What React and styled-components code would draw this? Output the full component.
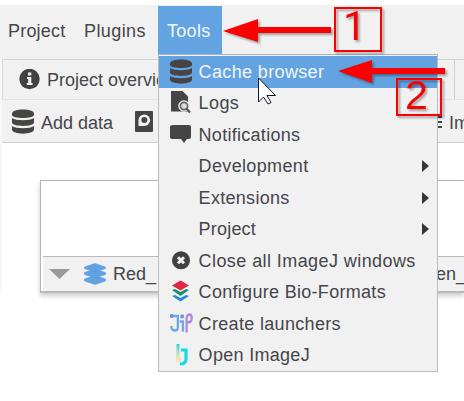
import React from "react";
import styled, { createGlobalStyle } from "styled-components";

const Global = createGlobalStyle`
  * { box-sizing: border-box; }
  body { margin: 0; background: #fff; overflow: hidden; }
`;
const Window = styled.main`
  position: relative;
  width: 464px;
  height: 401px;
  padding-top: 5px;
  overflow: hidden;
  background: #fff;
  color: #45454b;
  font: 18px/24px "Liberation Sans", Arial, sans-serif;
  white-space: nowrap;
`;
const MenuBar = styled.nav`
  display: flex;
  height: 54px;
  background: #f1f1f1;
`;
const MenuTitle = styled.div`
  width: ${(p) => p.$width}px;
  height: ${(p) => (p.$active ? 48 : 49)}px;
  margin-top: ${(p) => (p.$active ? 1 : 0)}px;
  padding: ${(p) => (p.$active ? 13 : 14)}px 0 0 ${(p) => p.$pad}px;
  letter-spacing: ${(p) => p.$spacing}px;
  color: ${(p) => (p.$active ? "#f2f6fc" : "inherit")};
  background: ${(p) => (p.$active ? "#64a3e2" : "transparent")};
`;
const Workspace = styled.section`
  border-left: 2px solid #f7f7f7;
`;
const Tabs = styled.div`
  display: flex;
  height: 41px;
  background: #f1f1f1;
  border-top: 1px solid #d2d2d2;
  border-bottom: 1px solid #e4e4e4;
`;
const Tab = styled.div`
  display: flex;
  align-items: center;
  gap: 7px;
  width: 453px;
  padding-left: 16px;
  border-left: 1px solid #dadada;
  border-right: 1px solid #d2d2d2;
`;
const Toolbar = styled.div`
  display: flex;
  align-items: center;
  height: 43px;
  padding-left: 10px;
  background: #f1f1f1;
  border-bottom: 1px solid #d0d0d0;
  > * { flex-shrink: 0; }
`;
const ToolLabel = styled.span`
  padding-top: 3px;
  margin-left: ${(p) => p.$before}px;
  width: ${(p) => p.$width}px;
`;
const ToolGlyph = styled.span`
  display: flex;
  width: ${(p) => p.$width}px;
`;
const Card = styled.div`
  height: 113px;
  margin: 37px 0 0 38px;
  border: 1px solid #b5b5b5;
  border-right: 0;
  border-bottom: 2px solid #b9b9b9;
  box-shadow: 0 3px 5px #0003;
`;
const CardBody = styled.div`
  height: 75px;
`;
const CardRow = styled.div`
  display: flex;
  align-items: center;
  height: 35px;
  margin-left: 2px;
  padding-left: 6px;
  border-top: 1px solid #b8b8b8;
  background: #f1f1f1;
  > * { flex-shrink: 0; }
`;
const RowIcon = styled.span`
  display: flex;
  width: 30px;
  margin-left: 13px;
`;
const RowName = styled.span`
  width: ${(p) => p.$width}px;
`;
const Dropdown = styled.div`
  position: absolute;
  left: 158px;
  top: 54px;
  width: 280px;
  height: 318px;
  padding-top: 1px;
  border: 1px solid #bbbbc3;
  border-top-color: #a9b5c8;
  background: #f1f1f1;
`;
const Item = styled.div`
  display: flex;
  align-items: center;
  height: 31.5px;
  padding-left: 11px;
  color: ${(p) => (p.$active ? "#f2f6fc" : "inherit")};
  background: ${(p) => (p.$active ? "#64a3e2" : "transparent")};
`;
const IconSlot = styled.span`
  display: flex;
  align-items: center;
  flex: none;
  width: 28.6px;
  height: 24px;
`;
const ItemText = styled.span`
  flex: 1;
  letter-spacing: ${(p) => p.$spacing}px;
`;
const SubArrow = styled.span`
  margin-right: 8px;
  border-left: 7px solid #353535;
  border-top: 6px solid transparent;
  border-bottom: 6px solid transparent;
`;
const Overlay = styled.svg`
  position: absolute;
  left: 0;
  top: 0;
  pointer-events: none;
`;
const Arrows = styled.g`
  fill: #fb0000;
  filter: drop-shadow(2px 2px 1px #0005);
`;
const Callout = styled.div`
  position: absolute;
  left: ${(p) => p.$x}px;
  top: ${(p) => p.$y}px;
  width: ${(p) => p.$w}px;
  height: ${(p) => p.$h}px;
  padding-left: ${(p) => p.$pad}px;
  border: 2px solid #fb0000;
  color: #fb0000;
  font-family: ${(p) => p.$face}, sans-serif;
  font-size: 41px;
  line-height: ${(p) => p.$line}px;
  filter: drop-shadow(2px 2px 1px #0005);
`;

const Database = () => (
  <svg width="22" height="25" viewBox="0 0 22 25" fill="#454543">
    <path d="M0 4.5C0-1 22-1 22 4.5V6C22 10 0 10 0 6ZM0 9C4 12 18 12 22 9V13.5C22 18 0 18 0 13.5ZM0 17C4 20 18 20 22 17V20.5C22 26 0 26 0 20.5Z" />
  </svg>
);
const Info = () => (
  <svg width="21" height="22" viewBox="0 1 21 22">
    <circle cx="10.5" cy="11" r="10.2" fill="#414141" />
    <path d="M9 4.5h3.3v3H9ZM8 9h4.3v6h1.3v2H7.8v-2h1.4v-4H8Z" fill="#f1f1f1" />
  </svg>
);
const LogFile = () => (
  <svg width="23" height="24" viewBox="1 1.5 23 24">
    <path d="M2 1h11l6 6v15H2Z" fill="#454545" />
    <circle cx="15" cy="16.5" r="5.8" fill="#f1f1f1" />
    <circle cx="15" cy="16.5" r="3.6" fill="#dcdcdc" stroke="#656565" strokeWidth="1.7" />
    <path d="m17.500 19 3.500 4" stroke="#555" strokeWidth="2" />
  </svg>
);
const Bubble = () => (
  <svg width="22" height="21" viewBox="0 0 22 21">
    <path d="M3 1h16q2 0 2 2v10q0 2-2 2h-2l-3 4-3-4H3q-3 0-3-2V3Q0 1 3 1" fill="#454545" />
  </svg>
);
const CloseIcon = () => (
  <svg width="22" height="22" viewBox="0.500 0.700 22 22">
    <circle cx="11.5" cy="11" r="9" fill="#414141" />
    <path d="m8.500 8 6 6m0-6-6 6" stroke="#f1f1f1" strokeWidth="3" />
  </svg>
);
const Formats = () => (
  <svg width="22" height="24" viewBox="0.500 0 22 24">
    <path d="m11 .5 8.500 5-8.500 5-8.500-5Z" fill="#e22645" />
    <path d="m2.500 10 3-1 5.500 3 5.500-3 3 1-8.500 6Z" fill="#199273" />
    <path d="m2.500 16 3-1 5.500 3 5.500-3 3 1-8.500 5.500Z" fill="#278bd0" />
  </svg>
);
const Jipipe = () => (
  <svg width="24" height="22" viewBox="0.500 0.500 26 22" fill="none" strokeWidth="2.500" preserveAspectRatio="none">
    <path d="M.5 3.500H9V15q0 3-3 3Q2 18 2 13.500M11 9h3.500v10M12.500 3.500h3" stroke="#6dabe2" />
    <path d="M18.500 20V7q0-5 3-5Q24 2 24 6q0 4-5 4" stroke="#ad89df" />
    <circle cx="2.500" cy="3.500" r="2" fill="#5a99d8" />
    <circle cx="13.500" cy="4" r="2" fill="#5a99d8" />
  </svg>
);
const ImageJ = () => (
  <svg width="22" height="24" viewBox="0 0 22 24" fill="none">
    <defs>
      <linearGradient id="ij" x1="0" y1="0" x2="0" y2="1">
        <stop offset="0" stopColor="#15d9e4" />
        <stop offset=".45" stopColor="#a1dac8" />
        <stop offset="1" stopColor="#f2e4b5" />
      </linearGradient>
    </defs>
    <path d="M6.500 1h3v15h-3Z" fill="url(#ij)" />
    <circle cx="8.500" cy="16.500" r="2.800" fill="#eee2b6" />
    <path d="M11 7h5v9q0 5-6 5" stroke="#12dce5" strokeWidth="3.200" />
  </svg>
);
const Layers = () => (
  <svg width="24" height="24" viewBox="0 0 24 24" fill="#62a2e2" stroke="#4d92d8" strokeWidth=".5">
    <path d="m12 14 6 1.500 4.500 1.500v2L12 22.500 1.500 19v-2L6 15.500Z" />
    <path d="m12 8 6 1 4.500 1.500v2L12 16 1.500 12.500v-2L6 9Z" />
    <path d="m12 1.500 10.500 3.500v1.500L12 10 1.500 6.500V5Z" />
  </svg>
);

const entries = [
  ["Cache browser", 0.36, Database],
  ["Logs", 0.4, LogFile],
  ["Notifications", 0.28, Bubble],
  ["Development", 0.35, null, true],
  ["Extensions", 0.3, null, true],
  ["Project", 0.2, null, true],
  ["Close all ImageJ windows", 0.42, CloseIcon],
  ["Configure Bio-Formats", 0.3, Formats],
  ["Create launchers", 0.33, Jipipe],
  ["Open ImageJ", 0.3, ImageJ],
];

export default function App() {
  return (
    <Window>
      <Global />
      <MenuBar>
        <MenuTitle $width={75} $pad={8} $spacing={0.2}>Project</MenuTitle>
        <MenuTitle $width={83} $pad={9} $spacing={0.4}>Plugins</MenuTitle>
        <MenuTitle $width={64} $pad={9} $spacing={0.3} $active>Tools</MenuTitle>
      </MenuBar>
      <Workspace>
        <Tabs>
          <Tab><Info />Project overview</Tab>
        </Tabs>
        <Toolbar>
          <Database />
          <ToolLabel $before={7} $width={94}>Add data</ToolLabel>
          <ToolGlyph $width={301}>
            <svg width="19" height="22" viewBox="0 0 19 22">
              <rect y="1" width="18" height="21" rx="1" fill="#454545" />
              <path d="M3.500 16V10a5.800 5.800 0 1 1 5.800 6Z" fill="#f1f1f1" />
              <circle cx="9.300" cy="10" r="3" fill="#454545" />
            </svg>
          </ToolGlyph>
          <ToolGlyph $width={13}>
            <svg width="8" height="18" fill="#454545">
              <path d="M1 4h5v2H1ZM1 9h5v2H1ZM1 14h5v2H1Z" />
            </svg>
          </ToolGlyph>
          <ToolLabel $before={0} $width={60}>Import</ToolLabel>
        </Toolbar>
        <Card>
          <CardBody />
          <CardRow>
            <svg width="21" height="12"><path d="M0 1h21L10.500 11Z" fill="#999" /></svg>
            <RowIcon><Layers /></RowIcon>
            <RowName $width={293}>Red_</RowName>
            <RowName $width={70}>Green_</RowName>
          </CardRow>
        </Card>
      </Workspace>
      <Dropdown>
        {entries.map(([label, spacing, Icon, sub], i) => (
          <Item key={label} $active={i === 0}>
            <IconSlot>{Icon && <Icon />}</IconSlot>
            <ItemText $spacing={spacing}>{label}</ItemText>
            {sub && <SubArrow />}
          </Item>
        ))}
      </Dropdown>
      <Callout $x={334} $y={7} $w={48} $h={45} $pad={7} $line={35} $face="Roboto">1</Callout>
      <Callout $x={396} $y={78} $w={46} $h={38} $pad={7} $line={30} $face="'Liberation Sans'">2</Callout>
      <Overlay width="464" height="401">
        <Arrows>
          <path d="m223 31 35-12v8h73v6h-73v9Z" />
          <path d="m338 71 34-11v8h73v6h-73v9Z" />
        </Arrows>
        <path d="M258.500 78v24l5-5 4.500 7 3-1.500-4-7h8.500Z" fill="#fff" stroke="#111827" />
      </Overlay>
    </Window>
  );
}
